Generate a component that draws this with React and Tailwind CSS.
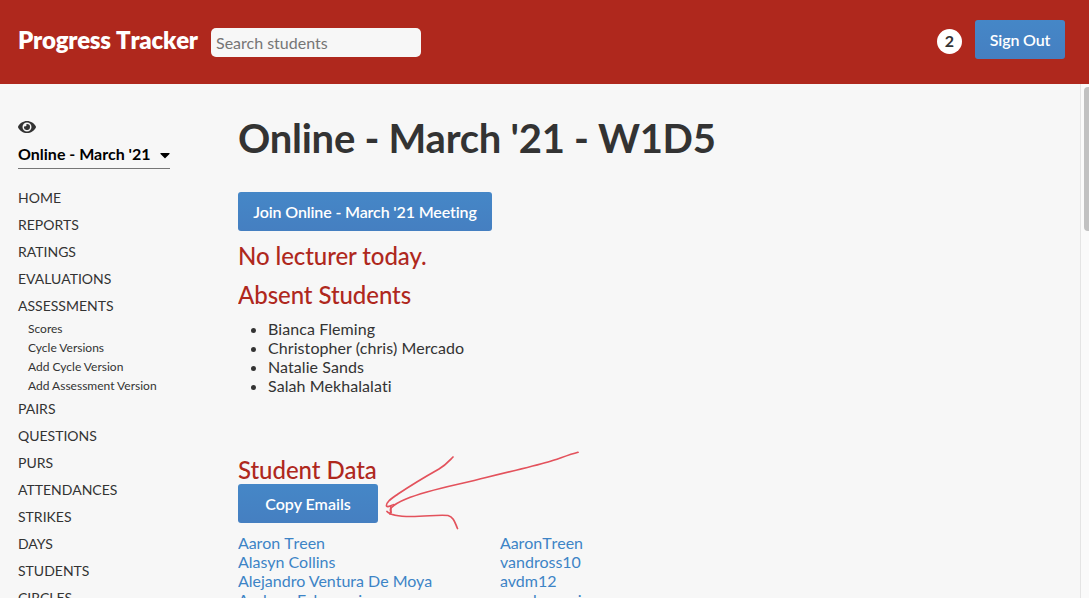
import { FaEye, FaCaretDown } from "react-icons/fa";

const before = ["Home", "Reports", "Ratings", "Evaluations", "Assessments"];
const sub = ["Scores", "Cycle Versions", "Add Cycle Version", "Add Assessment Version"];
const after = ["Pairs", "Questions", "PURs", "Attendances", "Strikes", "Days", "Students", "Circles"];
const absent = ["Bianca Fleming", "Christopher (chris) Mercado", "Natalie Sands", "Salah Mekhalalati"];
const students = [
  ["Aaron Treen", "AaronTreen"],
  ["Alasyn Collins", "vandross10"],
  ["Alejandro Ventura De Moya", "avdm12"],
  ["Andrew Echevarria", "anechevarria"],
];

function Button({ className, children }) {
  return (
    <button className={`block h-[39px] shrink-0 rounded-[3px] bg-linear-to-b from-[#4587c7] to-[#457fc1] text-center font-semibold text-white ${className}`}>
      {children}
    </button>
  );
}

function NavItem({ children }) {
  return <a className="block h-[27px] text-[14px] leading-[27px] uppercase">{children}</a>;
}

export default function App() {
  return (
    <div className="flex h-[598px] w-[1089px] flex-col overflow-hidden bg-[#f7f7f7] font-['Lato',sans-serif] text-[16px] leading-[19px] text-[#333] [font-variant-ligatures:none]">
      <header className="flex h-[84px] shrink-0 items-start bg-[#af281d] pr-6 pl-[18px]">
        <h1 className="mt-[25px] w-[193px] text-[24px] leading-[29px] font-extrabold tracking-[-0.24px] whitespace-nowrap text-white [font-kerning:none]">Progress Tracker</h1>
        <input
          placeholder="Search students"
          className="mt-[28px] h-[29px] w-[210px] rounded-[5px] bg-[#f7f7f7] px-[5px] text-[16px] placeholder:text-[#757575]"
        />
        <div className="mt-[29px] mr-[13px] ml-auto h-[25px] w-[25px] rounded-full bg-white text-center leading-[24px] font-bold">2</div>
        <Button className="mt-5 w-[90px] tracking-[-0.15px]">Sign Out</Button>
      </header>
      <div className="flex min-h-0 flex-1">
        <aside className="w-[238px] shrink-0 overflow-hidden pt-[34px] pl-[18px]">
          <FaEye className="h-[18px] w-[18px]" />
          <div className="mt-[8px] mb-[15px] flex h-[25px] w-[152px] justify-between border-b border-[#767676] font-bold text-black">
            <span>Online - March '21</span>
            <FaCaretDown className="mt-[3px] h-4 w-[10px]" />
          </div>
          <nav>
            {before.map((t) => <NavItem key={t}>{t}</NavItem>)}
            <div className="pl-[10px] text-[12px]">
              {sub.map((t) => <a key={t} className="block h-[19px]">{t}</a>)}
            </div>
            {after.map((t) => <NavItem key={t}>{t}</NavItem>)}
          </nav>
        </aside>
        <main className="min-w-0 flex-1 overflow-hidden pt-[29px]">
          <h1 className="text-[40px] leading-[50px] font-bold tracking-[-0.26px]">Online - March '21 - W1D5</h1>
          <Button className="mt-[29px] w-[254px] tracking-[-0.13px]">Join Online - March '21 Meeting</Button>
          <h2 className="mt-[10px] text-[24px] leading-[29px] font-medium tracking-[-0.07px] text-[#af281d]">No lecturer today.</h2>
          <h2 className="mt-[10px] text-[24px] leading-[29px] font-medium tracking-[-0.07px] text-[#af281d]">Absent Students</h2>
          <ul className="mt-[10px] list-disc pl-[30px] tracking-[0.08px]">
            {absent.map((t) => <li key={t}>{t}</li>)}
          </ul>
          <h2 className="mt-[61px] text-[24px] leading-[28px] font-medium tracking-[-0.04px] text-[#af281d]">Student Data</h2>
          <div className="relative">
            <Button className="w-[140px]">Copy Emails</Button>
            <svg className="absolute top-[-38px] left-[142px]" width="210" height="88" viewBox="380 446 210 88" fill="none" stroke="#e3525c" strokeWidth="1.7" strokeLinecap="round" strokeLinejoin="round">
              <path d="M578 452.300C568 455 558 459 548 462C534 466 509 472 486 477.500C458 485 430 489 406 499C396 503 393 506 391 508C389 511 393 512 390 514" />
              <path d="M453 457C449 461 446 465 439 469C423 478 410 486 398 494C391 499 386 502 386.500 506C388 508 391 505 394 504.500M391 507L390.500 514M387 511.500C390 515 396 516.500 411 516.500C427 516.500 438 514.500 448 515.500C454 517 455 523 457.500 528.500" />
            </svg>
          </div>
          <div className="mt-[10px] grid grid-cols-[262px_1fr] text-[#3d84c6]">
            {students.map(([n, g], i) => (
              <div key={n} className={i === 0 ? "contents tracking-[-0.08px] [font-kerning:none]" : "contents"}><a>{n}</a><a>{g}</a></div>
            ))}
          </div>
        </main>
        <div className="flex w-[9px] shrink-0 justify-end border-l border-[#e4e4e4] bg-[#fafafa] pt-[3px]">
          <div className="h-[144px] w-[5px] rounded-l-[4px] bg-[#c1c1c1]" />
        </div>
      </div>
    </div>
  );
}
